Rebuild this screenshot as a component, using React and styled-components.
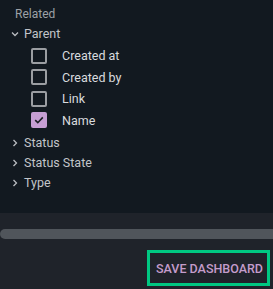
import React from 'react';
import styled, { createGlobalStyle } from 'styled-components';

const GlobalStyle = createGlobalStyle`
  html, body {
    margin: 0;
    padding: 0;
    background: #1f232a;
    font-family: Roboto, "Noto Sans", sans-serif;
  }
`;

const fields = [
  { label: 'Created at', checked: false },
  { label: 'Created by', checked: false },
  { label: 'Link', checked: false },
  { label: 'Name', checked: true },
];

const groups = ['Status', 'Status State', 'Type'];

function Chevron({ open }) {
  return (
    <ChevronIcon width="8" height="8" viewBox="0 0 8 8" $open={open}>
      <path d="M2.5 1 L5.5 4 L2.5 7" fill="none" stroke="currentColor" strokeWidth="1.3" />
    </ChevronIcon>
  );
}

export default function App() {
  return (
    <S.Page>
      <GlobalStyle />
      <S.Panel>
        <S.Heading>Related</S.Heading>
        <S.TreeRow>
          <Chevron open />
          Parent
        </S.TreeRow>
        <S.FieldList>
          {fields.map(f => (
            <S.Field key={f.label}>
              <S.Box $checked={f.checked}>
                {f.checked && (
                  <svg width="12" height="12" viewBox="0 0 12 12">
                    <path d="M2.2 6.2 L4.8 8.7 L9.8 3.4" fill="none" stroke="#1a1c22" strokeWidth="1.6" />
                  </svg>
                )}
              </S.Box>
              {f.label}
            </S.Field>
          ))}
        </S.FieldList>
        {groups.map(g => (
          <S.TreeRow key={g}>
            <Chevron />
            {g}
          </S.TreeRow>
        ))}
      </S.Panel>
      <S.Footer>
        <S.Scrollbar />
        <S.Actions>
          <S.SaveButton>SAVE DASHBOARD</S.SaveButton>
        </S.Actions>
      </S.Footer>
    </S.Page>
  );
}

const ChevronIcon = styled.svg`
  color: #b9bcc0;
  margin-right: 5px;
  transform: ${p => (p.$open ? 'rotate(90deg)' : 'none')};
`;

const S = {
  Page: styled.div`
    width: 273px;
    height: 289px;
    display: flex;
    flex-direction: column;
    overflow: hidden;
  `,
  Panel: styled.div`
    background: #121920;
    height: 213px;
    padding: 6px 0 0 11px;
    box-sizing: border-box;
  `,
  Heading: styled.div`
    color: #9da1a6;
    font-size: 12px;
    line-height: 16px;
    padding-left: 4px;
    margin-bottom: 2px;
  `,
  TreeRow: styled.div`
    display: flex;
    align-items: center;
    color: #c2c5c9;
    font-size: 12.5px;
    line-height: 20px;
    height: 20px;
  `,
  FieldList: styled.div`
    display: flex;
    flex-direction: column;
    padding: 1px 0 2px 20px;
  `,
  Field: styled.div`
    display: flex;
    align-items: center;
    height: 21.5px;
    color: #d9dbde;
    font-size: 12.5px;
  `,
  Box: styled.span`
    width: 16px;
    height: 16px;
    box-sizing: border-box;
    border-radius: 2px;
    border: ${p => (p.$checked ? 'none' : '2px solid #9b9ea2')};
    background: ${p => (p.$checked ? '#c69ed3' : 'transparent')};
    display: flex;
    align-items: center;
    justify-content: center;
    margin-right: 15px;
  `,
  Footer: styled.div`
    flex: 1;
    background: #1f232a;
    display: flex;
    flex-direction: column;
    padding-top: 16px;
  `,
  Scrollbar: styled.div`
    height: 10px;
    background: #50555b;
    border-radius: 5px 0 0 5px;
  `,
  Actions: styled.div`
    display: flex;
    justify-content: flex-end;
    padding: 11px 3px 0 0;
  `,
  SaveButton: styled.button`
    border: 3px solid #00c882;
    background: transparent;
    color: #c49ccb;
    font-family: Roboto, sans-serif;
    font-weight: 500;
    font-size: 12.5px;
    letter-spacing: 0;
    height: 36px;
    width: 123px;
    padding: 0 0 0 2px;
    display: flex;
    align-items: center;
    justify-content: center;
  `,
};
